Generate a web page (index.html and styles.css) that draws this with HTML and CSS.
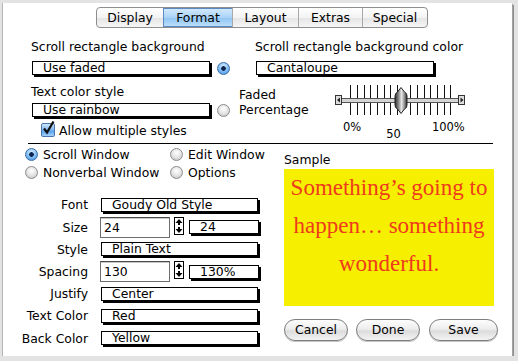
FILE: index.html
```html
<!DOCTYPE html>
<html lang="en">
<head>
    <meta charset="UTF-8">
    <title>Format</title>
    <link rel="stylesheet" href="styles.css">
</head>
<body>
  <div class="window">
    <div class="tabs">
      <div class="tab tab-display">Display</div>
      <div class="tab tab-format on">Format</div>
      <div class="tab tab-layout">Layout</div>
      <div class="tab tab-extras">Extras</div>
      <div class="tab tab-special">Special</div>
    </div>

    <div class="top">
      <div class="top-left">
        <div class="label">Scroll rectangle background</div>
        <div class="field-row">
          <div class="popup popup-wide">Use faded</div>
          <span class="radio on"></span>
        </div>
        <div class="label label-gap">Text color style</div>
        <div class="field-row field-row-tight">
          <div class="popup popup-wide">Use rainbow</div>
          <span class="radio"></span>
        </div>
        <div class="check-row">
          <span class="checkbox">
            <svg width="16" height="16" viewBox="0 0 16 16"><path d="M3 7.5 L6 11.5 L12.5 0.5" fill="none" stroke="#111" stroke-width="2.2"/></svg>
          </span>
          Allow multiple styles
        </div>
      </div>

      <div class="top-right">
        <div class="label indent">Scroll rectangle background color</div>
        <div class="field-row indent">
          <div class="popup popup-wide">Cantaloupe</div>
        </div>
        <div class="fade-row">
          <div class="fade-label">Faded<br>Percentage</div>
          <div class="slider">
            <svg width="134" height="34" viewBox="0 0 134 34">
              <defs>
                <linearGradient id="thumb" x1="0" x2="1" y1="0" y2="0">
                  <stop offset="0" stop-color="#2a2a2a"/>
                  <stop offset="0.3" stop-color="#8a8a8a"/>
                  <stop offset="0.55" stop-color="#e8e8e8"/>
                  <stop offset="0.8" stop-color="#8a8a8a"/>
                  <stop offset="1" stop-color="#2a2a2a"/>
                </linearGradient>
              </defs>
              <g stroke="#111" stroke-width="1">
                <path d="M16.5 2V32M23.5 2V32M30.5 2V32M36.5 2V32M43.5 2V32M50.5 2V32M56.5 2V32M63.5 2V32M76.5 2V32M83.5 2V32M90.5 2V32M96.5 2V32M103.5 2V32M110.5 2V32M116.5 2V32"/>
              </g>
              <rect x="6.5" y="15.5" width="119" height="4" fill="#d4d4d4" stroke="#555"/>
              <rect x="1.5" y="12.5" width="6" height="9" fill="#dedede" stroke="#333"/>
              <path d="M3 17 L6 14.5 L6 19.5 Z" fill="#222"/>
              <rect x="124.5" y="12.5" width="6" height="9" fill="#dedede" stroke="#333"/>
              <path d="M129.5 17 L126.5 14.5 L126.5 19.5 Z" fill="#222"/>
              <path d="M67 4.5 L70.5 9 Q73 10 73 13 L73 22 Q73 25 70.5 26 L67 30.5 L63.5 26 Q61 25 61 22 L61 13 Q61 10 63.5 9 Z" fill="url(#thumb)" stroke="#222"/>
            </svg>
            <div class="scale">
              <span class="scale-min">0%</span>
              <span class="scale-mid">50</span>
              <span class="scale-max">100%</span>
            </div>
          </div>
        </div>
      </div>
    </div>

    <div class="rule"></div>

    <div class="bottom">
      <div class="settings">
        <div class="windows">
          <div class="choice"><span class="radio on"></span>Scroll Window</div>
          <div class="choice"><span class="radio"></span>Edit Window</div>
          <div class="choice"><span class="radio"></span>Nonverbal Window</div>
          <div class="choice"><span class="radio"></span>Options</div>
        </div>

        <div class="form">
          <div class="form-label">Font</div>
          <div class="form-field"><div class="popup popup-long">Goudy Old Style</div></div>

          <div class="form-label">Size</div>
          <div class="form-field">
            <div class="number">24</div>
            <svg class="stepper" width="10" height="18" viewBox="0 0 10 18">
              <rect x="0.5" y="0.5" width="9" height="17" fill="#fff" stroke="#000"/>
              <path d="M5 2 L8.5 6 L6 6 L6 8 L4 8 L4 6 L1.5 6 Z" fill="#000"/>
              <path d="M5 16 L8.5 12 L6 12 L6 10 L4 10 L4 12 L1.5 12 Z" fill="#000"/>
            </svg>
            <div class="popup popup-short">24</div>
          </div>

          <div class="form-label">Style</div>
          <div class="form-field"><div class="popup popup-long">Plain Text</div></div>

          <div class="form-label">Spacing</div>
          <div class="form-field">
            <div class="number">130</div>
            <svg class="stepper" width="10" height="18" viewBox="0 0 10 18">
              <rect x="0.5" y="0.5" width="9" height="17" fill="#fff" stroke="#000"/>
              <path d="M5 2 L8.5 6 L6 6 L6 8 L4 8 L4 6 L1.5 6 Z" fill="#000"/>
              <path d="M5 16 L8.5 12 L6 12 L6 10 L4 10 L4 12 L1.5 12 Z" fill="#000"/>
            </svg>
            <div class="popup popup-short">130%</div>
          </div>

          <div class="form-label">Justify</div>
          <div class="form-field"><div class="popup popup-long">Center</div></div>

          <div class="form-label">Text Color</div>
          <div class="form-field"><div class="popup popup-long">Red</div></div>

          <div class="form-label">Back Color</div>
          <div class="form-field"><div class="popup popup-long">Yellow</div></div>
        </div>
      </div>

      <div class="sample">
        <div class="sample-title">Sample</div>
        <div class="sample-box">
          <p>Something’s going to happen… something wonderful.</p>
        </div>
        <div class="buttons">
          <div class="btn btn-cancel">Cancel</div>
          <div class="btn btn-done">Done</div>
          <div class="btn btn-save">Save</div>
        </div>
      </div>
    </div>
  </div>
</body>
</html>
```

FILE: styles.css
```css
body {
  margin: 0;
  background: #e3e3e3;
  font-family: "DejaVu Sans", "Lucida Grande", sans-serif;
  font-size: 12.4px;
  color: #000;
}
.window {
  box-sizing: border-box;
  margin: 3px 0 0 3px;
  padding-top: 4px;
  width: 509px;
  height: 353px;
  background: #fff;
  box-shadow: -1px 0 0 #b4b4b4, 1px 1px 0 #a2a2a2, 2px 2px 0 #8e8e8e;
}

/* tab bar */
.tabs {
  display: flex;
  width: max-content;
  height: 21px;
  margin-left: 93px;
  box-sizing: border-box;
  border: 1px solid #8e8e8e;
  border-radius: 4px;
  overflow: hidden;
  background: linear-gradient(#ffffff, #f3f3f3 50%, #e4e4e4 51%, #f6f6f6);
}
.tab {
  display: flex;
  align-items: center;
  justify-content: center;
  box-sizing: border-box;
  border-left: 1px solid #a9a9a9;
}
.tab-display { width: 66px; border-left: 0; }
.tab-format { width: 69px; }
.tab-layout { width: 66px; }
.tab-extras { width: 64px; }
.tab-special { width: 65px; }
.tab.on {
  background: linear-gradient(#d6ebfd, #aad3f7 50%, #8ec4f2 51%, #c0e1fc);
  box-shadow: inset 0 1px 0 #5d89c2, inset 0 -1px 0 #5d89c2;
  border-left-color: #5d89c2;
}

/* upper block */
.top {
  display: flex;
  height: 115px;
  box-sizing: border-box;
  padding: 11px 0 0 28px;
}
.top-left {
  width: 208px;
}
.label {
  line-height: 16px;
  white-space: nowrap;
}
.label-gap { margin-top: 9px; }
.indent { margin-left: 16px; }
.field-row {
  display: flex;
  align-items: center;
  margin-top: 6px;
}
.field-row-tight { margin-top: 3px; }
.popup {
  box-sizing: border-box;
  height: 14px;
  border: 1px solid #000;
  box-shadow: 2px 2px 0 #000;
  background: #fff;
  padding-left: 10px;
  line-height: 12px;
  white-space: nowrap;
  overflow: hidden;
}
.popup-wide { width: 178px; margin-left: 1px; }
.popup-long { width: 157px; margin-left: 1px; }
.popup-short { width: 70px; margin-left: 5px; }
.field-row .radio { margin-left: 7px; }

.radio {
  display: inline-block;
  flex: none;
  width: 13px;
  height: 13px;
  box-sizing: border-box;
  border-radius: 50%;
  border: 1px solid #8c8c8c;
  background: radial-gradient(circle at 50% 35%, #ffffff, #e2e2e2 55%, #b9b9b9);
}
.radio.on {
  border-color: #3c6ea6;
  background:
    radial-gradient(circle, #0e2650 0 2px, transparent 2.6px),
    radial-gradient(circle at 50% 30%, #d8eeff, #7dbaf2 55%, #3d8be0);
}

.check-row {
  display: flex;
  align-items: center;
  height: 16px;
  margin-top: 5px;
  margin-left: 10px;
  white-space: nowrap;
}
.checkbox {
  position: relative;
  width: 14px;
  height: 14px;
  margin-right: 4px;
  box-sizing: border-box;
  border: 1px solid #4a76ad;
  border-radius: 2px;
  background: linear-gradient(#cfe6fc, #7cb6ef 50%, #5aa2ea 60%, #a6d2fb);
}
.checkbox svg {
  position: absolute;
  left: -1px;
  top: -3px;
}

.top-right {
  flex: 1;
}
.fade-row {
  display: flex;
  margin-top: 8px;
}
.fade-label {
  width: 95px;
  margin-top: 4px;
  line-height: 15px;
}
.slider svg {
  display: block;
}
.scale {
  display: flex;
  align-items: flex-start;
  margin-top: 3px;
  font-size: 11.5px;
  line-height: 14px;
}
.scale-min { margin-left: 9px; }
.scale-mid { margin-left: 25px; margin-top: 7px; }
.scale-max { margin-left: 31px; }

.rule {
  width: 465px;
  margin-left: 25px;
  border-top: 1px solid #000;
}

/* lower block */
.bottom {
  display: flex;
}
.settings {
  width: 270px;
}
.windows {
  display: grid;
  grid-template-columns: 145px auto;
  grid-auto-rows: 18px;
  margin: 1px 0 0 22px;
}
.choice {
  display: flex;
  align-items: center;
  white-space: nowrap;
}
.choice .radio { margin-right: 5px; }

.form {
  display: grid;
  grid-template-columns: 85px auto;
  column-gap: 12px;
  grid-auto-rows: 22.2px;
  align-items: center;
  margin-top: 12.9px;
}
.form-label {
  text-align: right;
  white-space: nowrap;
}
.form-field {
  display: flex;
  align-items: center;
}
.number {
  box-sizing: border-box;
  width: 70px;
  height: 21px;
  border: 1px solid #6e6e6e;
  border-top-color: #4a4a4a;
  box-shadow: inset 0 1px 0 #c8c8c8;
  padding-left: 3px;
  line-height: 19px;
}
.stepper {
  margin-left: 4px;
  align-self: flex-start;
}

.sample {
  margin-left: 11px;
}
.sample-title {
  line-height: 16px;
  margin-top: 7.7px;
}
.sample-box {
  width: 210px;
  height: 137px;
  margin-top: 7.3px;
  background: #f7ef00;
}
.sample-box p {
  margin: -6px 0 0;
  padding: 0 4px;
  font-family: "Liberation Serif", "Times New Roman", serif;
  font-size: 23px;
  line-height: 37.8px;
  text-align: center;
  color: #ee3b1c;
}
.buttons {
  display: flex;
  margin-top: 13px;
}
.btn {
  display: flex;
  align-items: center;
  justify-content: center;
  box-sizing: border-box;
  height: 22px;
  border: 1px solid #7e7e7e;
  border-radius: 11px;
  background: linear-gradient(#fdfdfd, #ededed 45%, #dcdcdc 55%, #f3f3f3);
  box-shadow: 0 1px 0 #c4c4c4;
}
.btn-cancel { width: 64px; }
.btn-done { width: 64px; margin-left: 8px; }
.btn-save { width: 69px; margin-left: 9px; }
```
